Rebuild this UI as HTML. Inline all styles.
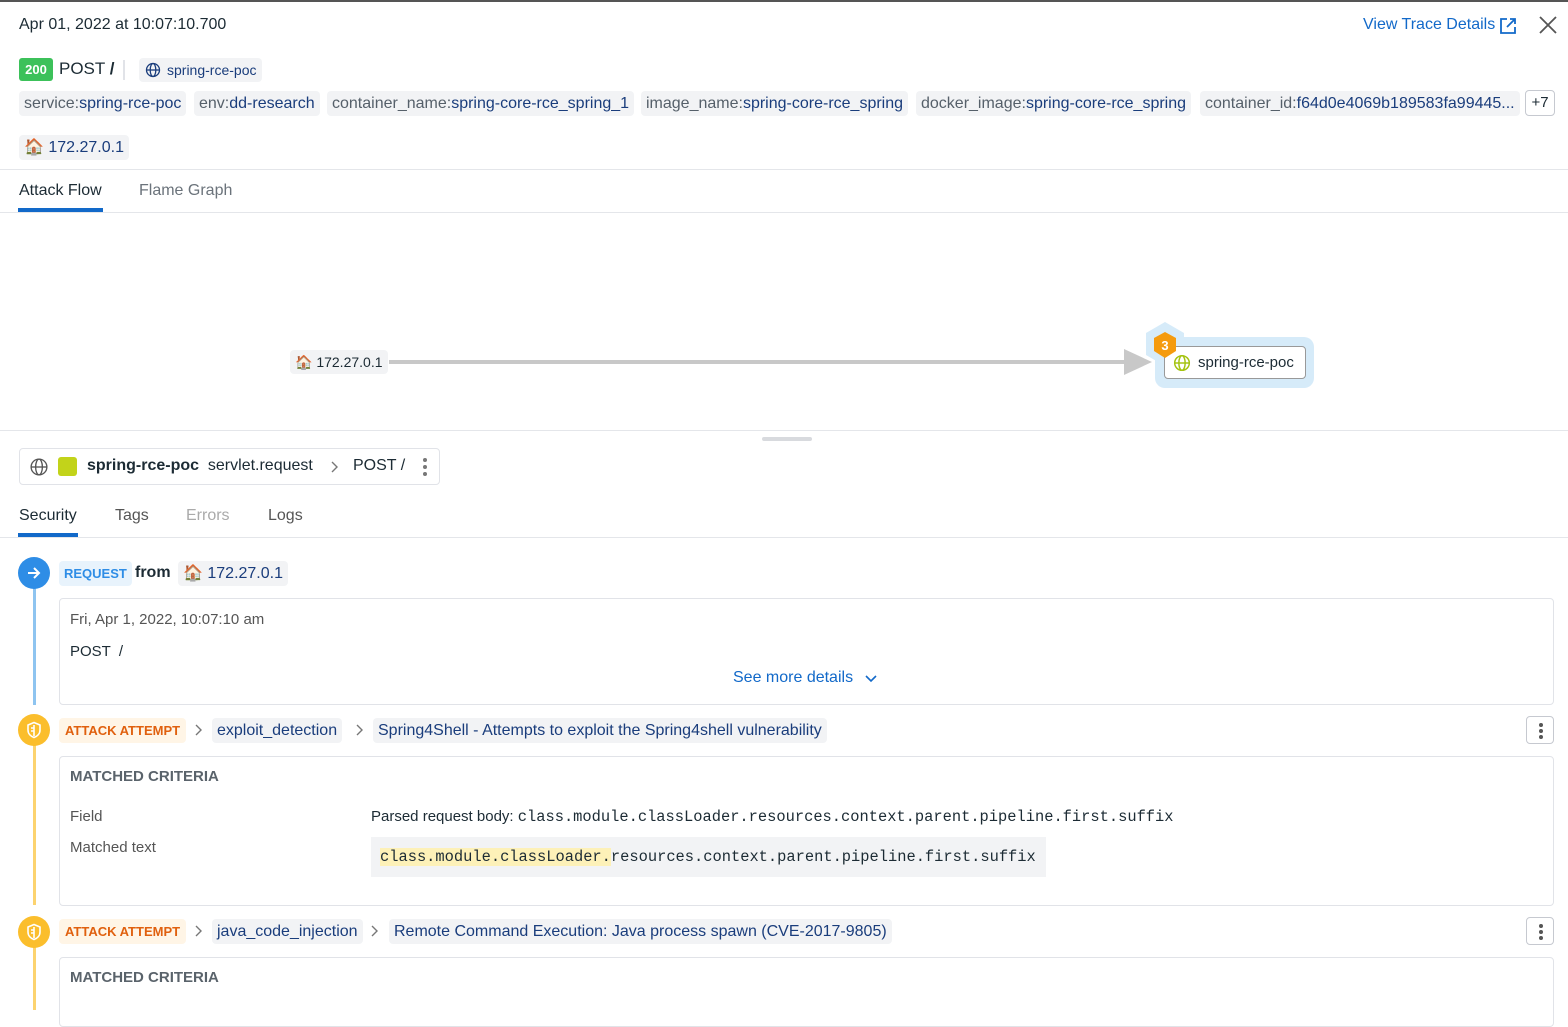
<!DOCTYPE html>
<html><head><meta charset="utf-8"><style>
*{box-sizing:border-box;margin:0;padding:0}
body{width:1568px;height:1010px;overflow:hidden;background:#fff;font-family:"Liberation Sans","Noto Sans CJK JP",sans-serif;color:#1c2b34;position:relative}
.a{position:absolute;white-space:nowrap}
.tag{position:absolute;top:91px;height:25px;line-height:25px;background:#f2f3f5;border-radius:4px;padding:0 5px;font-size:16px;color:#56606a}
.tag b{font-weight:normal;color:#1a3d7c}
.mono{font-family:"Liberation Mono",monospace}
.chip{position:absolute;height:25px;line-height:25px;border-radius:4px;padding:0 5px;font-size:16px}
.box{position:absolute;border:1px solid #e1e3e8;border-radius:4px}
.circ{position:absolute;width:32px;height:32px;border-radius:50%}
.gt{position:absolute}
.kebab{position:absolute;width:28px;height:28px;border:1px solid #c6c9d0;border-radius:4px;background:#fff}
.kebab i{position:absolute;left:12px;width:4px;height:4px;border-radius:50%;background:#555}
</style></head><body>
<div class="a" style="left:0;top:0;width:1568px;height:2px;background:#555"></div>
<div class="a" style="left:19px;top:16px;font-size:16px">Apr 01, 2022 at 10:07:10.700</div>
<div class="a" style="left:1363px;top:16px;font-size:16px;color:#1269c9">View Trace Details</div>
<svg class="a" style="left:1499px;top:17px" width="18" height="18" viewBox="0 0 18 18" fill="none" stroke="#1269c9" stroke-width="1.8"><path d="M8 2H2v14h14v-6M11 2h5v5M16 2L8 10"/></svg>
<svg class="a" style="left:1539px;top:16px" width="18" height="18" viewBox="0 0 18 18" stroke="#555" stroke-width="1.8"><path d="M1 1l16 16M17 1L1 17"/></svg>

<div class="a" style="left:19px;top:58px;width:34px;height:23px;background:#3cc15a;border-radius:3px;color:#fff;font-weight:bold;font-size:13px;line-height:23px;text-align:center">200</div>
<div class="a" style="left:59px;top:59px;font-size:17px">POST <b>/</b></div>
<div class="a" style="left:123px;top:60px;width:2px;height:20px;background:#e1e3e8"></div>
<div class="a" style="left:139px;top:58px;height:24px;background:#f2f3f5;border-radius:4px;padding:0 6px 0 6px;line-height:24px;font-size:14px;color:#1a3d7c"><span style="display:inline-block;vertical-align:-3px;margin-right:6px"><svg width="16" height="16" viewBox="0 0 16 16" fill="none" stroke="#1a3d7c" stroke-width="1.3"><circle cx="8" cy="8" r="6.5"/><ellipse cx="8" cy="8" rx="2.8" ry="6.5"/><path d="M1.5 8h13"/></svg></span>spring-rce-poc</div>

<div class="tag" style="left:19px">service:<b>spring-rce-poc</b></div>
<div class="tag" style="left:194px">env:<b>dd-research</b></div>
<div class="tag" style="left:327px">container_name:<b>spring-core-rce_spring_1</b></div>
<div class="tag" style="left:641px">image_name:<b>spring-core-rce_spring</b></div>
<div class="tag" style="left:916px">docker_image:<b>spring-core-rce_spring</b></div>
<div class="tag" style="left:1200px">container_id:<b>f64d0e4069b189583fa99445...</b></div>
<div class="a" style="left:1525px;top:90px;width:30px;height:26px;border:1px solid #c6c9d0;border-radius:4px;font-size:15px;line-height:24px;text-align:center">+7</div>
<div class="tag" style="left:19px;top:135px;color:#1a3d7c">🏠 172.27.0.1</div>

<div class="a" style="left:0;top:169px;width:1568px;height:1px;background:#e4e6ea"></div>
<div class="a" style="left:19px;top:182px;font-size:16px">Attack Flow</div>
<div class="a" style="left:139px;top:182px;font-size:16px;color:#6b737b">Flame Graph</div>
<div class="a" style="left:18px;top:208px;width:85px;height:4px;background:#1269c9"></div>
<div class="a" style="left:0;top:212px;width:1568px;height:1px;background:#e4e6ea"></div>

<div class="a" style="left:290px;top:350px;height:24px;background:#f2f3f5;border-radius:4px;padding:0 5px;line-height:24px;font-size:14px">🏠 172.27.0.1</div>
<div class="a" style="left:389px;top:360px;width:740px;height:4px;background:#c8c8c8"></div>
<svg class="a" style="left:1124px;top:349px" width="28" height="26"><path d="M0 0L28 13L0 26z" fill="#c8c8c8"/></svg>
<div class="a" style="left:1155px;top:337px;width:159px;height:51px;background:#d6ebf9;border-radius:10px"></div>
<svg class="a" style="left:1144px;top:320px" width="42" height="48"><path d="M21 2L40 13V35L21 46L2 35V13z" fill="#d6ebf9"/></svg>
<div class="a" style="left:1164px;top:346px;width:142px;height:33px;border:1px solid #999;border-radius:4px;background:#fff;font-size:15px;line-height:31px;padding-left:33px">spring-rce-poc</div>
<svg class="a" style="left:1144px;top:320px;z-index:2" width="42" height="48"><path d="M21 12L32 18V31L21 38L10 31V18z" fill="#f59b0e"/><text x="21" y="30" font-size="13" font-weight="bold" fill="#fff" text-anchor="middle" font-family="Liberation Sans">3</text></svg>
<svg class="a" style="left:1173px;top:354px" width="18" height="18" viewBox="0 0 16 16" fill="none" stroke="#a4c30f" stroke-width="1.3"><circle cx="8" cy="8" r="6.5"/><ellipse cx="8" cy="8" rx="2.8" ry="6.5"/><path d="M1.5 8h13"/></svg>

<div class="a" style="left:0;top:430px;width:1568px;height:1px;background:#e4e6ea"></div>
<div class="a" style="left:762px;top:437px;width:50px;height:4px;border-radius:2px;background:#d8dade"></div>

<div class="box" style="left:19px;top:448px;width:421px;height:37px"></div>
<svg class="a" style="left:30px;top:458px" width="18" height="18" viewBox="0 0 16 16" fill="none" stroke="#555" stroke-width="1.2"><circle cx="8" cy="8" r="7"/><ellipse cx="8" cy="8" rx="3" ry="7"/><path d="M1 8h14"/></svg>
<div class="a" style="left:58px;top:457px;width:19px;height:19px;border-radius:3px;background:#c2d31a"></div>
<div class="a" style="left:87px;top:457px;font-size:16px"><b>spring-rce-poc</b>&nbsp; servlet.request</div>
<svg class="gt" style="left:330px;top:460px" width="10" height="14" viewBox="0 0 10 14" fill="none" stroke="#777" stroke-width="1.4"><path d="M2 2l5 5-5 5"/></svg>
<div class="a" style="left:353px;top:457px;font-size:16px">POST /</div>
<div class="a" style="left:423px;top:458px;width:4px;height:4px;border-radius:2px;background:#777"></div>
<div class="a" style="left:423px;top:465px;width:4px;height:4px;border-radius:2px;background:#777"></div>
<div class="a" style="left:423px;top:472px;width:4px;height:4px;border-radius:2px;background:#777"></div>

<div class="a" style="left:19px;top:507px;font-size:16px">Security</div>
<div class="a" style="left:115px;top:507px;font-size:16px;color:#555">Tags</div>
<div class="a" style="left:186px;top:507px;font-size:16px;color:#aaa">Errors</div>
<div class="a" style="left:268px;top:507px;font-size:16px;color:#555">Logs</div>
<div class="a" style="left:18px;top:533px;width:60px;height:4px;background:#1269c9"></div>
<div class="a" style="left:0;top:537px;width:1568px;height:1px;background:#e4e6ea"></div>

<div class="a" style="left:33px;top:585px;width:3px;height:120px;background:#8ec4f0"></div>
<div class="circ" style="left:18px;top:557px;background:#2e8de6"></div>
<svg class="a" style="left:26px;top:565px" width="16" height="16" viewBox="0 0 16 16" fill="none" stroke="#fff" stroke-width="2"><path d="M2 8h11M8 3l5 5-5 5"/></svg>
<div class="chip" style="left:59px;top:561px;background:#e8f3fc;color:#2e8de6;font-weight:bold;font-size:13px">REQUEST</div>
<div class="a" style="left:135px;top:564px;font-size:16px;font-weight:bold">from</div>
<div class="chip" style="left:178px;top:561px;background:#f2f3f5;color:#1a3d7c">🏠 172.27.0.1</div>

<div class="box" style="left:59px;top:598px;width:1495px;height:107px"></div>
<div class="a" style="left:70px;top:611px;font-size:15px;color:#555">Fri, Apr 1, 2022, 10:07:10 am</div>
<div class="a" style="left:70px;top:643px;font-size:15px">POST &nbsp;/</div>
<div class="a" style="left:733px;top:669px;font-size:16px;color:#1269c9">See more details</div>
<svg class="a" style="left:864px;top:674px" width="14" height="10" viewBox="0 0 14 10" fill="none" stroke="#1269c9" stroke-width="1.6"><path d="M2 2l5 5 5-5"/></svg>

<div class="a" style="left:33px;top:745px;width:3px;height:160px;background:#fcd36f"></div>
<div class="circ" style="left:18px;top:714px;background:#fbbe2c"></div>
<svg class="a" style="left:26px;top:721px" width="16" height="18" viewBox="0 0 16 18" fill="none" stroke="#fff" stroke-width="1.6"><path d="M8 1.5L14 4v5c0 4-3 6.5-6 7.5C5 15.5 2 13 2 9V4z"/><path d="M8 4v11M5 7h3M5 10h3"/></svg>
<div class="chip" style="left:59px;top:718px;background:#fff5e6;color:#e0600e;font-weight:bold;font-size:13px;padding:0 6px">ATTACK ATTEMPT</div>
<svg class="gt" style="left:194px;top:723px" width="10" height="14" viewBox="0 0 10 14" fill="none" stroke="#777" stroke-width="1.4"><path d="M2 2l5 5-5 5"/></svg>
<div class="chip" style="left:212px;top:718px;background:#f2f3f5;color:#1a3d7c">exploit_detection</div>
<svg class="gt" style="left:355px;top:723px" width="10" height="14" viewBox="0 0 10 14" fill="none" stroke="#777" stroke-width="1.4"><path d="M2 2l5 5-5 5"/></svg>
<div class="chip" style="left:373px;top:718px;background:#f2f3f5;color:#1a3d7c">Spring4Shell - Attempts to exploit the Spring4shell vulnerability</div>
<div class="kebab" style="left:1526px;top:716px"><i style="top:6px"></i><i style="top:12px"></i><i style="top:18px"></i></div>

<div class="box" style="left:59px;top:756px;width:1495px;height:150px"></div>
<div class="a" style="left:70px;top:768px;font-size:15px;font-weight:bold;color:#5a636b">MATCHED CRITERIA</div>
<div class="a" style="left:70px;top:808px;font-size:15px;color:#555">Field</div>
<div class="a" style="left:70px;top:839px;font-size:15px;color:#555">Matched text</div>
<div class="a" style="left:371px;top:808px;font-size:15px">Parsed request body: <span class="mono" style="font-size:15.4px">class.module.classLoader.resources.context.parent.pipeline.first.suffix</span></div>
<div class="a" style="left:371px;top:837px;width:675px;height:40px;background:#f2f3f5"></div>
<div class="a mono" style="left:380px;top:847px;font-size:15.4px;line-height:21px"><span style="background:#fdf1b8">class.module.classLoader.</span>resources.context.parent.pipeline.first.suffix</div>

<div class="a" style="left:33px;top:945px;width:3px;height:65px;background:#fcd36f"></div>
<div class="circ" style="left:18px;top:916px;background:#fbbe2c"></div>
<svg class="a" style="left:26px;top:923px" width="16" height="18" viewBox="0 0 16 18" fill="none" stroke="#fff" stroke-width="1.6"><path d="M8 1.5L14 4v5c0 4-3 6.5-6 7.5C5 15.5 2 13 2 9V4z"/><path d="M8 4v11M5 7h3M5 10h3"/></svg>
<div class="chip" style="left:59px;top:919px;background:#fff5e6;color:#e0600e;font-weight:bold;font-size:13px;padding:0 6px">ATTACK ATTEMPT</div>
<svg class="gt" style="left:194px;top:924px" width="10" height="14" viewBox="0 0 10 14" fill="none" stroke="#777" stroke-width="1.4"><path d="M2 2l5 5-5 5"/></svg>
<div class="chip" style="left:212px;top:919px;background:#f2f3f5;color:#1a3d7c">java_code_injection</div>
<svg class="gt" style="left:370px;top:924px" width="10" height="14" viewBox="0 0 10 14" fill="none" stroke="#777" stroke-width="1.4"><path d="M2 2l5 5-5 5"/></svg>
<div class="chip" style="left:389px;top:919px;background:#f2f3f5;color:#1a3d7c">Remote Command Execution: Java process spawn (CVE-2017-9805)</div>
<div class="kebab" style="left:1526px;top:917px"><i style="top:6px"></i><i style="top:12px"></i><i style="top:18px"></i></div>

<div class="box" style="left:59px;top:957px;width:1495px;height:70px"></div>
<div class="a" style="left:70px;top:969px;font-size:15px;font-weight:bold;color:#5a636b">MATCHED CRITERIA</div>
</body></html>
